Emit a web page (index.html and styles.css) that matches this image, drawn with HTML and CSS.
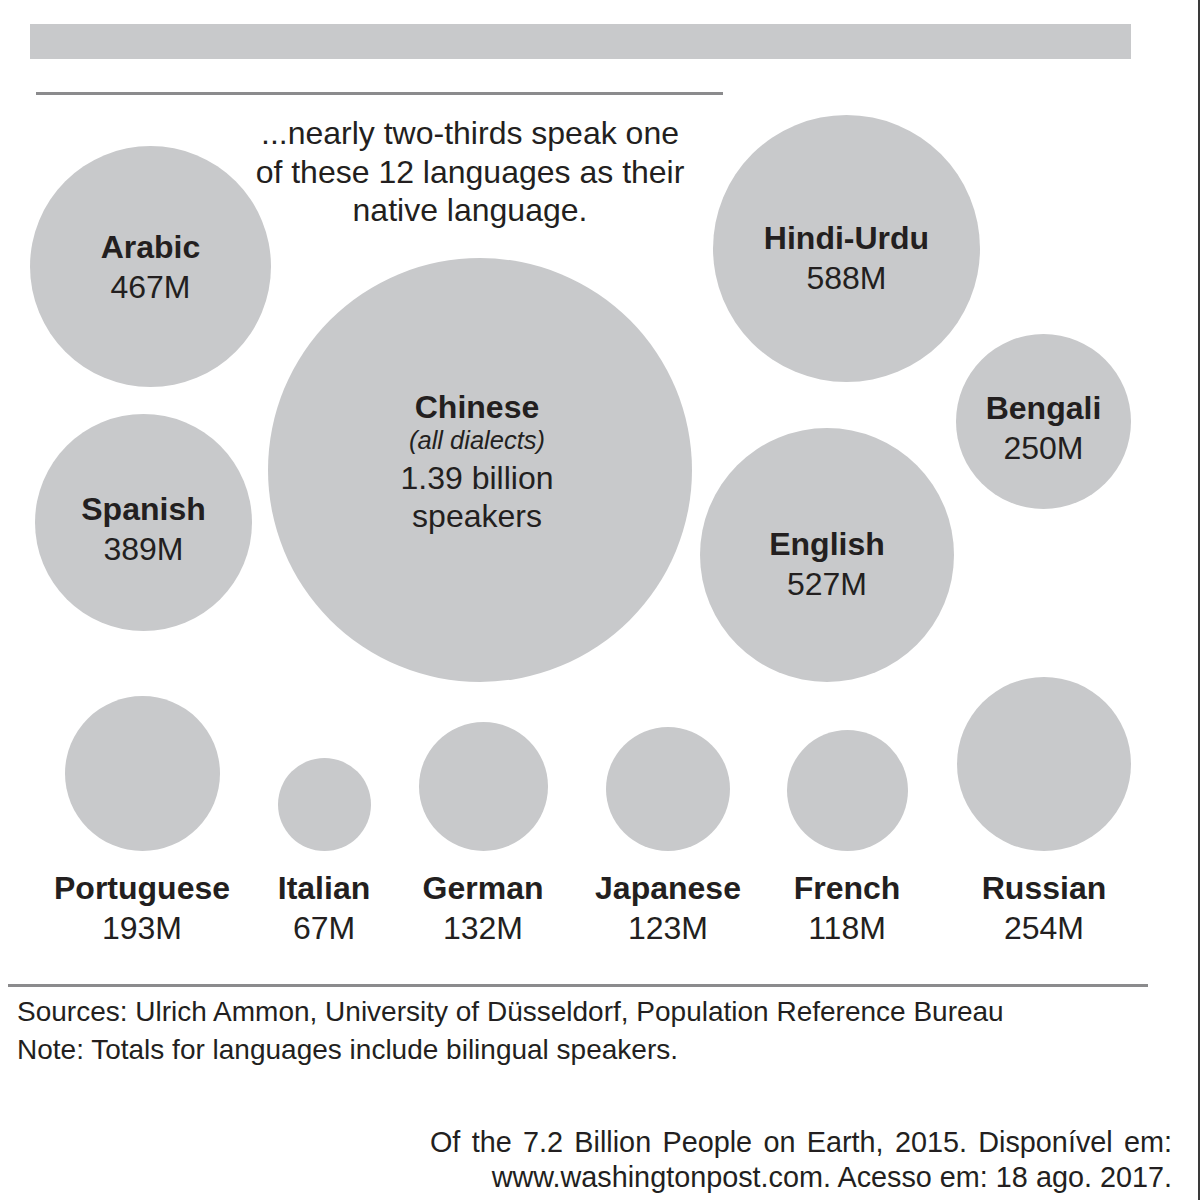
FILE: index.html
```html
<!DOCTYPE html>
<html lang="en">
<head>
<meta charset="utf-8">
<title>Of the 7.2 Billion People on Earth</title>
<link rel="stylesheet" href="styles.css">
</head>
<body>
<div class="frame">
  <div class="top-bar"></div>
  <div class="rule-short"></div>

  <div class="chart">
    <p class="intro">...nearly two-thirds speak one<br>of these 12 languages as their<br>native language.</p>

    <div class="bubble" style="left:30px;top:51px;width:241px;height:241px;">
      <div class="name">Arabic</div><div class="value">467M</div>
    </div>
    <div class="bubble chinese" style="left:268px;top:163px;width:424px;height:424px;">
      <div class="name">Chinese</div>
      <div class="dialects">(all dialects)</div>
      <div class="value">1.39 billion</div>
      <div class="value">speakers</div>
    </div>
    <div class="bubble shift" style="left:713px;top:20px;width:267px;height:267px;">
      <div class="name">Hindi-Urdu</div><div class="value">588M</div>
    </div>
    <div class="bubble shift-sm" style="left:956px;top:239px;width:175px;height:175px;">
      <div class="name">Bengali</div><div class="value">250M</div>
    </div>
    <div class="bubble shift-sm" style="left:35px;top:319px;width:217px;height:217px;">
      <div class="name">Spanish</div><div class="value">389M</div>
    </div>
    <div class="bubble shift" style="left:700px;top:333px;width:254px;height:254px;">
      <div class="name">English</div><div class="value">527M</div>
    </div>

    <div class="row">
      <div class="item" style="left:32px;">
        <div class="slot"><div class="dot" style="width:155px;height:155px;"></div></div>
        <div class="name">Portuguese</div><div class="value">193M</div>
      </div>
      <div class="item" style="left:214px;">
        <div class="slot"><div class="dot" style="width:93px;height:93px;"></div></div>
        <div class="name">Italian</div><div class="value">67M</div>
      </div>
      <div class="item" style="left:373px;">
        <div class="slot"><div class="dot" style="width:129px;height:129px;"></div></div>
        <div class="name">German</div><div class="value">132M</div>
      </div>
      <div class="item" style="left:558px;">
        <div class="slot"><div class="dot" style="width:124px;height:124px;"></div></div>
        <div class="name">Japanese</div><div class="value">123M</div>
      </div>
      <div class="item" style="left:737px;">
        <div class="slot"><div class="dot" style="width:121px;height:121px;"></div></div>
        <div class="name">French</div><div class="value">118M</div>
      </div>
      <div class="item" style="left:934px;">
        <div class="slot"><div class="dot" style="width:174px;height:174px;"></div></div>
        <div class="name">Russian</div><div class="value">254M</div>
      </div>
    </div>
  </div>

  <div class="rule-long"></div>

  <div class="notes">
    <p>Sources: Ulrich Ammon, University of Düsseldorf, Population Reference Bureau</p>
    <p>Note: Totals for languages include bilingual speakers.</p>
  </div>

  <div class="citation">
    <p class="cite-wide">Of the 7.2 Billion People on Earth, 2015. Disponível em:</p>
    <p>www.washingtonpost.com. Acesso em: 18 ago. 2017.</p>
  </div>
</div>
</body>
</html>
```

FILE: styles.css
```css
* { box-sizing: border-box; }

html, body {
  margin: 0;
  padding: 0;
  background: #ffffff;
}

body {
  font-family: "Liberation Sans", Arial, Helvetica, sans-serif;
  color: #231f20;
}

p { margin: 0; }

.frame {
  width: 1200px;
  height: 1200px;
  border-right: 2px solid #3a3a3a;
  overflow: hidden;
}

.top-bar {
  margin: 24px 0 0 30px;
  width: 1101px;
  height: 35px;
  background: #c8c9cb;
}

.rule-short {
  margin: 33px 0 0 36px;
  width: 687px;
  height: 3px;
  background: #8b8b8d;
}

.chart {
  position: relative;
  height: 889px;
}

.intro {
  position: absolute;
  left: 170px;
  top: 19px;
  width: 600px;
  text-align: center;
  font-size: 32px;
  line-height: 38.5px;
}

.bubble {
  position: absolute;
  border-radius: 50%;
  background: #c8c9cb;
  display: flex;
  flex-direction: column;
  align-items: center;
  justify-content: center;
  text-align: center;
}

.bubble.shift { padding-top: 18px; }
.bubble.shift-sm { padding-top: 12px; }
.bubble.chinese { padding-bottom: 16px; padding-right: 6px; }

.name {
  font-size: 32px;
  font-weight: 700;
  line-height: 40px;
  white-space: nowrap;
}

.value {
  font-size: 32px;
  line-height: 40px;
  white-space: nowrap;
}

.chinese .name { line-height: 36px; }

.dialects {
  font-size: 25.5px;
  font-style: italic;
  line-height: 31px;
  margin-bottom: 3px;
}

.chinese .value { line-height: 38px; }

.row {
  position: absolute;
  left: 0;
  right: 0;
  top: 582px;
}

.item {
  position: absolute;
  top: 0;
  width: 220px;
  display: flex;
  flex-direction: column;
  align-items: center;
}

.slot {
  height: 174px;
  display: flex;
  align-items: flex-end;
  margin-bottom: 17px;
}

.dot {
  border-radius: 50%;
  background: #c8c9cb;
}

.rule-long {
  margin-left: 8px;
  width: 1140px;
  height: 3px;
  background: #8b8b8d;
}

.notes {
  margin-top: 6px;
  padding-left: 17px;
  font-size: 28px;
  line-height: 38px;
}

.citation {
  margin-top: 56px;
  padding-right: 26px;
  text-align: right;
  font-size: 28.8px;
  line-height: 35px;
}

.cite-wide { word-spacing: 3.3px; }
```
